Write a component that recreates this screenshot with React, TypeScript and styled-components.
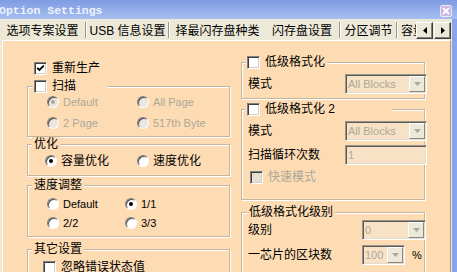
import React from "react";
import styled, { createGlobalStyle } from "styled-components";

const face = "#ece9d8";
const peach = "#fddcb4";
const grayText = "#aca899";

const GlobalStyle = createGlobalStyle`
  html, body {
    margin: 0;
    padding: 0;
    background: ${face};
  }
  body {
    font-family: "Liberation Sans", "Noto Sans CJK SC", sans-serif;
    font-size: 12px;
    color: #000;
  }
`;

const Window = styled.div`
  width: 457px;
  height: 272px;
  overflow: hidden;
  display: flex;
  flex-direction: column;
  background: ${face};
`;

const TitleBar = styled.div`
  flex: none;
  height: 19px;
  display: flex;
  align-items: center;
  justify-content: space-between;
  background: linear-gradient(#7f9be3, #a6bff0);
`;

const Title = styled.span`
  font-family: "Liberation Mono", monospace;
  font-weight: bold;
  font-size: 11.5px;
  color: #eef2fc;
  margin: 2px 0 0 -1px;
`;

const CloseButton = styled.div`
  width: 12px;
  height: 12px;
  margin: 2px 5px 0 0;
  box-sizing: border-box;
  border: 1px solid #efe8fa;
  border-radius: 2px;
  background: #c9b5e2;
  display: flex;
  align-items: center;
  justify-content: center;
`;

const Body = styled.div`
  flex: 1;
  min-height: 0;
  display: flex;
`;

const Main = styled.div`
  width: 452px;
  display: flex;
  flex-direction: column;
`;

const RightFrame = styled.div`
  width: 5px;
  background: #8aa4ea;
`;

const TabStrip = styled.div`
  flex: none;
  height: 21px;
  display: flex;
`;

const TabList = styled.div`
  width: 416px;
  display: flex;
  overflow: hidden;
`;

const Tab = styled.div<{ $w: number }>`
  flex: none;
  width: ${(p) => p.$w}px;
  display: flex;
  align-items: center;
  justify-content: center;
  white-space: nowrap;
  font-size: 12px;
`;

const ClippedTab = styled(Tab)`
  justify-content: flex-start;
  padding-left: 3px;
`;

const Sep = styled.div`
  flex: none;
  width: 2px;
  margin: 3px 0 2px;
  box-sizing: border-box;
  border-left: 1px solid #9a9888;
  border-right: 1px solid #fff;
`;

const ArrowButton = styled.div`
  flex: none;
  width: 17px;
  height: 17px;
  margin: 3px 1px 0 0;
  box-sizing: border-box;
  border: 1px solid;
  border-color: #fff #404040 #404040 #fff;
  box-shadow: inset -1px -1px 0 #808080;
  background: ${face};
  display: flex;
  align-items: center;
  justify-content: center;
`;

const Panel = styled.div`
  flex: 1;
  min-height: 0;
  overflow: hidden;
  margin: 0 1px 0 2px;
  background: ${peach};
  border-top: 1px solid #fff;
  border-left: 1px solid #fff;
  border-right: 1px solid #9d9a90;
  display: grid;
  grid-template-columns: 203px 184px;
  column-gap: 11px;
  align-items: start;
  padding-left: 24px;
`;

const LeftColumn = styled.div`
  display: flex;
  flex-direction: column;
  padding-top: 19px;
`;

const RightColumn = styled.div`
  display: flex;
  flex-direction: column;
  padding-top: 21px;
`;

const Group = styled.div<{ $mt: number; $pad: string; $gap?: number }>`
  position: relative;
  margin-top: ${(p) => p.$mt}px;
  padding: ${(p) => p.$pad};
  border: 1px solid #c3b5a0;
  box-shadow: inset 1px 1px 0 #fff, 1px 1px 0 #fff;
  display: flex;
  flex-direction: column;
  gap: ${(p) => p.$gap ?? 0}px;
`;

const Legend = styled.div<{ $left?: number; $w?: number }>`
  position: absolute;
  top: -8px;
  left: ${(p) => p.$left ?? 4}px;
  ${(p) => (p.$w ? `width: ${p.$w}px;` : "")}
  box-sizing: border-box;
  height: 14px;
  padding: 0 2px;
  background: ${peach};
  display: flex;
  align-items: center;
  gap: 5px;
`;

const Label = styled.span<{ $dis?: boolean; $latin?: boolean }>`
  font-size: ${(p) => (p.$latin ? 11 : 12)}px;
  line-height: 14px;
  color: ${(p) => (p.$dis ? grayText : "#000")};
  white-space: nowrap;
`;

const CheckRow = styled.div<{ $indent?: number }>`
  height: 16px;
  display: flex;
  align-items: center;
  gap: 5px;
  padding-left: ${(p) => p.$indent ?? 0}px;
`;

const Box = styled.span<{ $dis?: boolean }>`
  flex: none;
  width: 13px;
  height: 13px;
  box-sizing: border-box;
  border: 1px solid;
  border-color: #808080 #fff #fff #808080;
  box-shadow: inset 1px 1px 0 #404040, inset -1px -1px 0 #d4d0c8;
  background: ${(p) => (p.$dis ? "#e6dfd2" : "#fff")};
  display: flex;
  align-items: center;
  justify-content: center;
`;

const RadioGrid = styled.div<{ $cols: string; $gap: number }>`
  display: grid;
  grid-template-columns: ${(p) => p.$cols};
  row-gap: ${(p) => p.$gap}px;
`;

const RadioItem = styled.div`
  height: 14px;
  display: flex;
  align-items: center;
`;

const Radio = styled.span<{ $on?: boolean; $dis?: boolean }>`
  flex: none;
  width: 12px;
  height: 12px;
  margin-right: 4px;
  box-sizing: border-box;
  border-radius: 50%;
  border: 1px solid;
  border-color: #808080 #fff #fff #808080;
  box-shadow: inset 1px 1px 0 #505050;
  background: ${(p) => (p.$dis ? "#ebe6de" : "#fff")};
  display: flex;
  align-items: center;
  justify-content: center;

  &::after {
    content: "";
    display: ${(p) => (p.$on ? "block" : "none")};
    width: 4px;
    height: 4px;
    border-radius: 50%;
    background: ${(p) => (p.$dis ? grayText : "#000")};
  }
`;

const FieldRow = styled.div<{ $lw: number }>`
  height: 20px;
  display: grid;
  grid-template-columns: ${(p) => p.$lw}px auto auto;
  column-gap: 7px;
  align-items: center;
  justify-content: start;
`;

const Sunken = styled.div<{ $w: number }>`
  width: ${(p) => p.$w}px;
  height: 20px;
  box-sizing: border-box;
  border: 1px solid;
  border-color: #9a968c #fff #fff #9a968c;
  padding: 1px;
  box-shadow: inset 1px 1px 0 #5c5a54, inset -1px -1px 0 #e4dccf;
  background: #f8e2c6;
  display: flex;
  align-items: center;
`;

const FieldText = styled.span`
  flex: 1;
  padding-left: 1px;
  font-size: 11px;
  color: ${grayText};
  white-space: nowrap;
  overflow: hidden;
`;

const DropButton = styled.span`
  flex: none;
  width: 16px;
  height: 16px;
  box-sizing: border-box;
  border: 1px solid;
  border-color: #fff #8a8880 #8a8880 #fff;
  background: ${face};
  display: flex;
  align-items: center;
  justify-content: center;
`;

const CheckBox: React.FC<{ checked?: boolean; disabled?: boolean }> = ({ checked, disabled }) => (
  <Box $dis={disabled}>
    {checked && (
      <svg width="9" height="9" viewBox="0 0 9 9">
        <path d="M1.2 3.8 L3.4 6 L7.8 1.6" stroke="#000" strokeWidth="1.8" fill="none" />
      </svg>
    )}
  </Box>
);

const Combo: React.FC<{ w: number; value: string }> = ({ w, value }) => (
  <Sunken $w={w}>
    <FieldText>{value}</FieldText>
    <DropButton>
      <svg width="7" height="4" viewBox="0 0 7 4">
        <path d="M0 0 H7 L3.5 4 Z" fill={grayText} />
      </svg>
    </DropButton>
  </Sunken>
);

const tabs = [
  { label: "选项专案设置", w: 85, sep: true },
  { label: "USB 信息设置", w: 81, sep: true },
  { label: "择最闪存盘种类", w: 95, sep: false },
  { label: "闪存盘设置", w: 74, sep: true },
  { label: "分区调节", w: 55, sep: true },
];

const App: React.FC = () => (
  <Window>
    <GlobalStyle />
    <TitleBar>
      <Title>Option Settings</Title>
      <CloseButton>
        <svg width="8" height="8" viewBox="0 0 8 8">
          <path d="M1 1 L7 7 M7 1 L1 7" stroke="#fff" strokeWidth="1.8" />
        </svg>
      </CloseButton>
    </TitleBar>
    <Body>
      <Main>
        <TabStrip>
          <TabList>
            {tabs.map((t) => (
              <React.Fragment key={t.label}>
                <Tab $w={t.w}>{t.label}</Tab>
                {t.sep && <Sep />}
              </React.Fragment>
            ))}
            <ClippedTab $w={40}>容量设置</ClippedTab>
          </TabList>
          <ArrowButton>
            <svg width="4" height="7" viewBox="0 0 4 7">
              <path d="M4 0 V7 L0 3.5 Z" fill="#000" />
            </svg>
          </ArrowButton>
          <ArrowButton>
            <svg width="4" height="7" viewBox="0 0 4 7">
              <path d="M0 0 V7 L4 3.5 Z" fill="#000" />
            </svg>
          </ArrowButton>
        </TabStrip>

        <Panel>
          <LeftColumn>
            <CheckRow $indent={7}>
              <CheckBox checked />
              <Label>重新生产</Label>
            </CheckRow>

            <Group $mt={10} $pad="8px 0 6px 19px">
              <Legend $w={75}>
                <CheckBox />
                <Label>扫描</Label>
              </Legend>
              <RadioGrid $cols="90px 90px" $gap={7}>
                <RadioItem>
                  <Radio $on $dis />
                  <Label $dis $latin>Default</Label>
                </RadioItem>
                <RadioItem>
                  <Radio $dis />
                  <Label $dis $latin>All Page</Label>
                </RadioItem>
                <RadioItem>
                  <Radio $dis />
                  <Label $dis $latin>2 Page</Label>
                </RadioItem>
                <RadioItem>
                  <Radio $dis />
                  <Label $dis $latin>517th Byte</Label>
                </RadioItem>
              </RadioGrid>
            </Group>

            <Group $mt={7} $pad="9px 0 7px 17px">
              <Legend>
                <Label>优化</Label>
              </Legend>
              <RadioGrid $cols="92px 92px" $gap={0}>
                <RadioItem>
                  <Radio $on />
                  <Label>容量优化</Label>
                </RadioItem>
                <RadioItem>
                  <Radio />
                  <Label>速度优化</Label>
                </RadioItem>
              </RadioGrid>
            </Group>

            <Group $mt={9} $pad="11px 0 6px 19px">
              <Legend>
                <Label>速度调整</Label>
              </Legend>
              <RadioGrid $cols="78px 78px" $gap={5}>
                <RadioItem>
                  <Radio />
                  <Label $latin>Default</Label>
                </RadioItem>
                <RadioItem>
                  <Radio $on />
                  <Label $latin>1/1</Label>
                </RadioItem>
                <RadioItem>
                  <Radio />
                  <Label $latin>2/2</Label>
                </RadioItem>
                <RadioItem>
                  <Radio />
                  <Label $latin>3/3</Label>
                </RadioItem>
              </RadioGrid>
            </Group>

            <Group $mt={12} $pad="9px 0 10px 15px">
              <Legend>
                <Label>其它设置</Label>
              </Legend>
              <CheckRow>
                <CheckBox />
                <Label>忽略错误状态值</Label>
              </CheckRow>
            </Group>
          </LeftColumn>

          <RightColumn>
            <Group $mt={0} $pad="11px 0 4px 6px">
              <Legend $left={3}>
                <CheckBox />
                <Label>低级格式化</Label>
              </Legend>
              <FieldRow $lw={90}>
                <Label>模式</Label>
                <Combo w={82} value="All Blocks" />
              </FieldRow>
            </Group>

            <Group $mt={10} $pad="11px 0 14px 6px" $gap={4}>
              <Legend $left={3} $w={147}>
                <CheckBox />
                <Label>低级格式化 2</Label>
              </Legend>
              <FieldRow $lw={90}>
                <Label>模式</Label>
                <Combo w={82} value="All Blocks" />
              </FieldRow>
              <FieldRow $lw={90}>
                <Label>扫描循环次数</Label>
                <Sunken $w={82}>
                  <FieldText>1</FieldText>
                </Sunken>
              </FieldRow>
              <CheckRow $indent={2}>
                <CheckBox disabled />
                <Label $dis>快速模式</Label>
              </CheckRow>
            </Group>

            <Group $mt={12} $pad="7px 0 10px 6px" $gap={5}>
              <Legend $left={5}>
                <Label>低级格式化级别</Label>
              </Legend>
              <FieldRow $lw={107}>
                <Label>级别</Label>
                <Combo w={64} value="0" />
              </FieldRow>
              <FieldRow $lw={107}>
                <Label>一芯片的区块数</Label>
                <Combo w={43} value="100" />
                <Label $latin>%</Label>
              </FieldRow>
            </Group>
          </RightColumn>
        </Panel>
      </Main>
      <RightFrame />
    </Body>
  </Window>
);

export default App;
